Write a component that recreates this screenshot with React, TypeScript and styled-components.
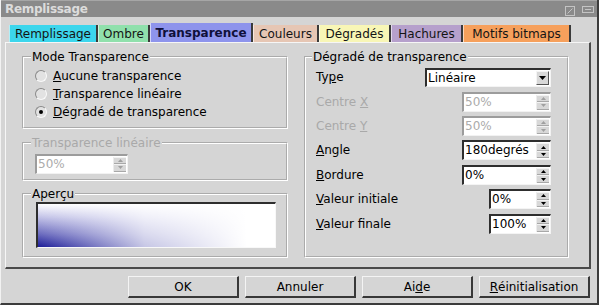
import React, { FC } from 'react';
import styled, { createGlobalStyle } from 'styled-components';

const GlobalStyle = createGlobalStyle`
	html, body {
		margin: 0;
		padding: 0;
		background: #d5d5d5;
	}
	body {
		font-family: "DejaVu Sans", Verdana, sans-serif;
		font-size: 12px;
		color: #000;
	}
`;

const tabs = [
	{ label: 'Remplissage', color: '#3cd6ec', w: 89 },
	{ label: 'Ombre', color: '#90e0ac', w: 52 },
	{ label: 'Transparence', color: '#8e94ec', w: 103, active: true },
	{ label: 'Couleurs', color: '#e6c6b4', w: 66 },
	{ label: 'Dégradés', color: '#f8f6b6', w: 72 },
	{ label: 'Hachures', color: '#b6a0cc', w: 72 },
	{ label: 'Motifs bitmaps', color: '#f6a05c', w: 108 },
];

const Arrow: FC<{ up?: boolean; color: string }> = ({ up, color }) => (
	<svg width="5" height="3" viewBox="0 0 5 3">
		<polygon points={up ? '2.5,0 5,3 0,3' : '0,0 5,0 2.5,3'} fill={color} />
	</svg>
);

type SpinProps = {
	value: string;
	width: number;
	disabled?: boolean;
};

const Spin: FC<SpinProps> = ({ value, width, disabled }) => (
	<SpinBox $w={width} $disabled={disabled}>
		<SpinText $disabled={disabled}>{value}</SpinText>
		<SpinButtons>
			<SpinHalf>
				<Arrow up color={disabled ? '#a0a0a0' : '#000'} />
			</SpinHalf>
			<SpinHalf>
				<Arrow color={disabled ? '#a0a0a0' : '#000'} />
			</SpinHalf>
		</SpinButtons>
	</SpinBox>
);

const RadioRow: FC<{ checked?: boolean; children: React.ReactNode }> = ({ checked, children }) => (
	<Row>
		<RadioDot>{checked && <Dot />}</RadioDot>
		<span>{children}</span>
	</Row>
);

const App: FC = () => {
	return (
		<>
			<GlobalStyle />
			<Window>
				<TitleBar>
					<Title>Remplissage</Title>
					<TitleButtons>
						<svg width="11" height="10" viewBox="0 0 11 10">
							<rect x="0.5" y="0.5" width="9" height="9" fill="none" stroke="#c4c4c4" />
							<line x1="2.5" y1="7.5" x2="7.5" y2="2.5" stroke="#c4c4c4" />
						</svg>
						<svg width="12" height="8" viewBox="0 0 12 8">
							<rect x="0.5" y="0.5" width="11" height="6" fill="none" stroke="#c4c4c4" />
							<line x1="3" y1="3.5" x2="9" y2="3.5" stroke="#c4c4c4" />
						</svg>
					</TitleButtons>
				</TitleBar>
				<Body>
					<TabRow>
						{tabs.map((t) => (
							<Tab key={t.label} $color={t.color} $w={t.w} $active={t.active}>
								{t.label}
							</Tab>
						))}
					</TabRow>
					<Panel>
						<Column $w={266}>
							<Group $h={79}>
								<Legend>Mode Transparence</Legend>
								<RadioList>
									<RadioRow>
										<u>A</u>ucune transparence
									</RadioRow>
									<RadioRow>
										<u>T</u>ransparence linéaire
									</RadioRow>
									<RadioRow checked>
										<u>D</u>égradé de transparence
									</RadioRow>
								</RadioList>
							</Group>
							<Group $h={45}>
								<Legend $disabled>Transparence linéaire</Legend>
								<GroupBody $top={4}>
									<Spin value="50%" width={93} disabled />
								</GroupBody>
							</Group>
							<Group $h={71}>
								<Legend>Aperçu</Legend>
								<GroupBody $top={1} $left={1}>
									<Preview />
								</GroupBody>
							</Group>
						</Column>
						<Column $w={265}>
							<Group $h={208} $pad={10}>
								<Legend>Dégradé de transparence</Legend>
								<Form>
									<Label>
										Ty<u>p</u>e
									</Label>
									<Select>
										<SelectText>Linéaire</SelectText>
										<SelectButton>
											<svg width="7" height="4" viewBox="0 0 7 4">
												<polygon points="0,0 7,0 3.5,4" fill="#000" />
											</svg>
										</SelectButton>
									</Select>
									<Label $disabled>
										Centre <u>X</u>
									</Label>
									<Spin value="50%" width={89} disabled />
									<Label $disabled>
										Centre <u>Y</u>
									</Label>
									<Spin value="50%" width={89} disabled />
									<Label>
										<u>A</u>ngle
									</Label>
									<Spin value="180degrés" width={89} />
									<Label>
										<u>B</u>ordure
									</Label>
									<Spin value="0%" width={89} />
									<Label>
										<u>V</u>aleur initiale
									</Label>
									<Spin value="0%" width={62} />
									<Label>
										<u>V</u>aleur finale
									</Label>
									<Spin value="100%" width={62} />
								</Form>
							</Group>
						</Column>
					</Panel>
					<Footer>
						<Button>OK</Button>
						<Button>Annuler</Button>
						<Button>
							Ai<u>d</u>e
						</Button>
						<Button>
							<u>R</u>éinitialisation
						</Button>
					</Footer>
				</Body>
			</Window>
		</>
	);
};

const Window = styled.div`
	width: 599px;
	height: 305px;
	box-sizing: border-box;
	background: #d5d5d5;
	border-left: 1px solid #f2f2f2;
	border-right: 2px solid #3c3c3c;
	border-bottom: 2px solid #3c3c3c;
	display: flex;
	flex-direction: column;
	overflow: hidden;
`;

const TitleBar = styled.div`
	height: 17px;
	box-sizing: border-box;
	border-top: 1px solid #a6a6a6;
	background: #8a8a8a;
	display: flex;
	align-items: center;
	justify-content: space-between;
	padding: 0 3px 0 4px;
`;

const Title = styled.div`
	color: #dcdcdc;
	font-weight: bold;
	font-size: 12px;
	letter-spacing: -0.3px;
`;

const TitleButtons = styled.div`
	display: flex;
	align-items: flex-start;
	gap: 6px;
	margin-top: 3px;
`;

const Body = styled.div`
	flex: 1;
	display: flex;
	flex-direction: column;
	padding: 6px 5px 0 4px;
`;

const TabRow = styled.div`
	display: flex;
	align-items: flex-end;
	height: 19px;
	padding-left: 4px;
`;

const Tab = styled.div<{ $color: string; $w: number; $active?: boolean }>`
	width: ${(p) => p.$w}px;
	height: ${(p) => (p.$active ? 19 : 17)}px;
	box-sizing: border-box;
	background: ${(p) => p.$color};
	border-left: 1px solid rgba(255, 255, 255, 0.6);
	border-right: 2px solid #3a3a3a;
	display: flex;
	align-items: center;
	justify-content: center;
	font-weight: ${(p) => (p.$active ? 'bold' : 'normal')};
	color: ${(p) => (p.$active ? '#10103a' : '#141414')};
	white-space: nowrap;
`;

const Panel = styled.div`
	width: 586px;
	height: 227px;
	box-sizing: border-box;
	border-top: 1px solid #f6f6f6;
	border-left: 1px solid #f6f6f6;
	border-right: 2px solid #4a4a4a;
	border-bottom: 2px solid #4a4a4a;
	padding: 7px 0 0 16px;
	display: flex;
	gap: 16px;
`;

const Column = styled.div<{ $w: number }>`
	width: ${(p) => p.$w}px;
	display: flex;
	flex-direction: column;
	gap: 6.5px;
`;

const Group = styled.fieldset<{ $h: number; $pad?: number }>`
	margin: 0;
	min-width: 0;
	height: ${(p) => p.$h}px;
	box-sizing: border-box;
	padding: 0 0 0 ${(p) => p.$pad ?? 11}px;
	border: 2px groove #fff;
`;

const Legend = styled.legend<{ $disabled?: boolean }>`
	padding: 0 1px;
	margin-left: -4px;
	line-height: 14px;
	color: ${(p) => (p.$disabled ? '#a9a9a9' : '#000')};
`;

const RadioList = styled.div`
	padding-top: 3px;
	display: flex;
	flex-direction: column;
`;

const Row = styled.div`
	height: 18px;
	display: flex;
	align-items: center;
	gap: 6px;
`;

const RadioDot = styled.span`
	width: 12px;
	height: 12px;
	box-sizing: border-box;
	border-radius: 50%;
	border: 1px solid;
	border-color: #8a8a8a #fafafa #fafafa #8a8a8a;
	background: #e2e2e2;
	display: flex;
	align-items: center;
	justify-content: center;
`;

const Dot = styled.span`
	width: 4px;
	height: 4px;
	border-radius: 50%;
	background: #000;
`;

const GroupBody = styled.div<{ $top: number; $left?: number }>`
	padding: ${(p) => p.$top}px 0 0 ${(p) => p.$left ?? 0}px;
`;

const Preview = styled.div`
	width: 240px;
	height: 46px;
	box-sizing: border-box;
	border-style: solid;
	border-width: 2px 1px 1px 2px;
	border-color: #2e2e2e #f8f8f8 #f8f8f8 #2e2e2e;
	background:
		linear-gradient(to right, rgba(255, 255, 255, 0) 0%, rgba(255, 255, 255, 0.75) 45%, #fff 88%),
		linear-gradient(to bottom, #fff 0%, #c4c4e8 30%, #6a6abe 70%, #1c1c98 100%);
`;

const Form = styled.div`
	padding: 1px 16px 0 0;
	display: grid;
	grid-template-columns: 1fr auto;
	grid-auto-rows: 24.4px;
	align-items: center;
	justify-items: end;
`;

const Label = styled.span<{ $disabled?: boolean }>`
	justify-self: start;
	color: ${(p) => (p.$disabled ? '#a9a9a9' : '#000')};
	white-space: nowrap;
`;

const SpinBox = styled.div<{ $w: number; $disabled?: boolean }>`
	width: ${(p) => p.$w}px;
	height: 20px;
	box-sizing: border-box;
	display: flex;
	background: #fff;
	border-style: solid;
	border-width: 2px 1px 1px 2px;
	border-color: ${(p) =>
		p.$disabled ? '#9c9c9c #f2f2f2 #f2f2f2 #9c9c9c' : '#2e2e2e #f4f4f4 #f4f4f4 #2e2e2e'};
`;

const SpinText = styled.span<{ $disabled?: boolean }>`
	flex: 1;
	padding-left: 1px;
	line-height: 17px;
	color: ${(p) => (p.$disabled ? '#ababab' : '#000')};
	white-space: nowrap;
	overflow: hidden;
`;

const SpinButtons = styled.div`
	width: 12px;
	display: flex;
	flex-direction: column;
	background: #d8d8d8;
	border-left: 1px solid #ececec;
	margin: 1px 1px 1px 0;
`;

const SpinHalf = styled.div`
	flex: 1;
	display: flex;
	align-items: center;
	justify-content: center;
	border-top: 1px solid #f2f2f2;
	border-bottom: 1px solid #a8a8a8;
`;

const Select = styled.div`
	width: 126px;
	height: 19px;
	box-sizing: border-box;
	display: flex;
	background: #fff;
	border-style: solid;
	border-width: 2px 1px 1px 2px;
	border-color: #2e2e2e #f4f4f4 #f4f4f4 #2e2e2e;
`;

const SelectText = styled.span`
	flex: 1;
	padding-left: 1px;
	line-height: 16px;
`;

const SelectButton = styled.div`
	width: 13px;
	margin: 1px 1px 1px 0;
	background: #d8d8d8;
	border-top: 1px solid #f4f4f4;
	border-left: 1px solid #f4f4f4;
	border-right: 1px solid #555;
	border-bottom: 1px solid #555;
	box-sizing: border-box;
	display: flex;
	align-items: center;
	justify-content: center;
`;

const Footer = styled.div`
	width: 586px;
	display: flex;
	justify-content: flex-end;
	gap: 6px;
	padding: 7px 1px 0 0;
	box-sizing: border-box;
`;

const Button = styled.div`
	width: 111px;
	height: 22px;
	box-sizing: border-box;
	background: #d5d5d5;
	border-top: 1px solid #f4f4f4;
	border-left: 1px solid #f4f4f4;
	border-right: 2px solid #383838;
	border-bottom: 2px solid #383838;
	display: flex;
	align-items: center;
	justify-content: center;
	white-space: nowrap;
`;

export default App;
